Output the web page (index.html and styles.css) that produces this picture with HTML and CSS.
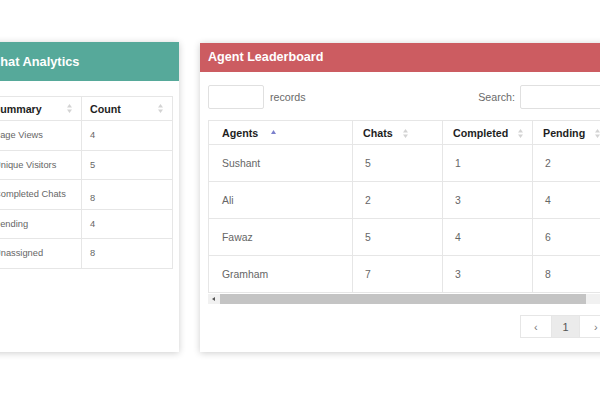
FILE: index.html
```html
<!DOCTYPE html>
<html>
<head>
<meta charset="utf-8">
<link rel="stylesheet" href="styles.css">
</head>
<body>
<div class="page">
  <section class="card card-left">
    <h2 class="card-title teal">Chat Analytics</h2>
    <div class="body-left">
      <table class="tbl tbl-small">
        <thead>
          <tr>
            <th class="c1">Summary<svg class="sort right" width="5" height="9" viewBox="0 0 5 9"><path d="M0 3.6L2.5 0 5 3.6z M0 5.4L2.5 9 5 5.4z"/></svg></th>
            <th>Count<svg class="sort right" width="5" height="9" viewBox="0 0 5 9"><path d="M0 3.6L2.5 0 5 3.6z M0 5.4L2.5 9 5 5.4z"/></svg></th>
          </tr>
        </thead>
        <tbody>
          <tr><td>Page Views</td><td>4</td></tr>
          <tr><td>Unique Visitors</td><td>5</td></tr>
          <tr><td>Completed Chats</td><td><span class="low">8</span></td></tr>
          <tr><td>Pending</td><td>4</td></tr>
          <tr><td>Unassigned</td><td>8</td></tr>
        </tbody>
      </table>
    </div>
  </section>

  <section class="card card-right">
    <h2 class="card-title red">Agent Leaderboard</h2>
    <div class="body-right">
      <div class="controls">
        <div class="ctl"><input class="box len-box" type="text"><span class="lbl rec">records</span></div>
        <div class="ctl"><span class="lbl srch">Search:</span><input class="box search-box" type="text"></div>
      </div>
      <div class="table-wrap">
        <table class="tbl tbl-big">
          <thead>
            <tr>
              <th class="a">Agents<svg class="sort asc" width="5" height="4" viewBox="0 0 5 4"><path d="M0 4L2.5 0 5 4z"/></svg></th>
              <th>Chats<svg class="sort" width="5" height="9" viewBox="0 0 5 9"><path d="M0 3.6L2.5 0 5 3.6z M0 5.4L2.5 9 5 5.4z"/></svg></th>
              <th>Completed<svg class="sort" width="5" height="9" viewBox="0 0 5 9"><path d="M0 3.6L2.5 0 5 3.6z M0 5.4L2.5 9 5 5.4z"/></svg></th>
              <th>Pending<svg class="sort" width="5" height="9" viewBox="0 0 5 9"><path d="M0 3.6L2.5 0 5 3.6z M0 5.4L2.5 9 5 5.4z"/></svg></th>
            </tr>
          </thead>
          <tbody>
            <tr><td>Sushant</td><td>5</td><td>1</td><td>2</td></tr>
            <tr><td>Ali</td><td>2</td><td>3</td><td>4</td></tr>
            <tr><td>Fawaz</td><td>5</td><td>4</td><td>6</td></tr>
            <tr><td>Gramham</td><td>7</td><td>3</td><td>8</td></tr>
          </tbody>
        </table>
      </div>
      <div class="hscroll"><span class="arrow"></span><span class="thumb"></span></div>
      <div class="pager">
        <span class="pg">&#8249;</span><span class="pg active">1</span><span class="pg">&#8250;</span>
      </div>
    </div>
  </section>
</div>
</body>
</html>
```

FILE: styles.css
```css
html, body {
  margin: 0;
  padding: 0;
  overflow: hidden;
  background: #fff;
}
body {
  font-family: "Liberation Sans", Arial, sans-serif;
  width: 600px;
  height: 400px;
}
.page {
  display: flex;
  align-items: flex-start;
  gap: 21px;
  padding-top: 42px;
  margin-left: -24px;
  width: 800px;
}
.card {
  flex: none;
  background: #fff;
  box-shadow: 0 1px 7px rgba(0, 0, 0, 0.2);
}
.card-left {
  width: 203px;
  height: 310px;
}
.card-right {
  width: 420px;
  height: 309px;
  margin-top: 1px;
  overflow: hidden;
}
.card-title {
  margin: 0;
  color: #fff;
  font-weight: bold;
}
.teal {
  background: #56a99a;
  height: 39px;
  line-height: 39px;
  padding-left: 15px;
  font-size: 12.8px;
}
.red {
  background: #cc5c61;
  height: 29px;
  line-height: 29px;
  padding-left: 8px;
  font-size: 12.6px;
}
.body-left {
  padding: 15px 6px 0 9px;
}
.tbl {
  border-collapse: collapse;
  border: 1px solid #e6e6e6;
}
.tbl th, .tbl td {
  border: 1px solid #e6e6e6;
  text-align: left;
  vertical-align: middle;
  padding: 0;
}
.tbl th {
  font-weight: bold;
  color: #1e1e1e;
  font-size: 10.7px;
}
.tbl-small {
  width: 188px;
  table-layout: fixed;
}
.tbl-small th {
  height: 23px;
  padding: 0 9px 0 8px;
}
.tbl-small th.c1 {
  width: 96px;
  box-sizing: border-box;
  padding-left: 7px;
}
.tbl-small td {
  height: 28.5px;
  font-size: 9.3px;
  color: #666;
  padding-left: 8px;
}
.low {
  display: inline-block;
  padding-top: 8px;
}
.sort {
  fill: #d3d3d3;
  vertical-align: middle;
  margin-left: 10px;
}
.sort.right {
  float: right;
  margin-top: 1px;
}
.sort.asc {
  fill: #7b80cc;
  margin-left: 13px;
  vertical-align: 3px;
}
.body-right {
  padding: 13px 8px 14px 8px;
}
.controls {
  display: flex;
  justify-content: space-between;
  align-items: center;
  height: 24px;
}
.ctl {
  display: flex;
  align-items: center;
}
.box {
  box-sizing: border-box;
  height: 24px;
  border: 1px solid #e0e0e0;
  border-radius: 2px;
  margin: 0;
  padding: 0;
  background: #fff;
}
.len-box {
  width: 56px;
}
.search-box {
  width: 92px;
}
.lbl {
  font-size: 10.7px;
  color: #6a6a6a;
}
.rec {
  margin-left: 6px;
}
.srch {
  margin-right: 5px;
}
.table-wrap {
  margin-top: 11px;
  overflow: hidden;
  width: 404px;
}
.tbl-big {
  width: 414px;
  table-layout: fixed;
}
.tbl-big th {
  height: 24px;
  padding-left: 10px;
  width: 90px;
  box-sizing: border-box;
}
.tbl-big th.a {
  width: 144px;
  padding-left: 13px;
}
.tbl-big td {
  height: 36px;
  font-size: 10.4px;
  color: #666;
  padding-left: 12px;
}
.tbl-big td:first-child {
  padding-left: 13px;
}
.hscroll {
  display: flex;
  align-items: center;
  height: 10px;
  margin-top: 1px;
  background: #f1f1f1;
  width: 404px;
}
.arrow {
  width: 0;
  height: 0;
  border-top: 2px solid transparent;
  border-bottom: 2px solid transparent;
  border-right: 3px solid #555;
  margin-left: 4px;
}
.thumb {
  height: 10px;
  width: 366px;
  margin-left: 5px;
  background: #c4c4c4;
}
.pager {
  display: flex;
  margin-top: 11px;
  margin-left: 312px;
}
.pg {
  box-sizing: border-box;
  height: 23px;
  width: 35px;
  border: 1px solid #e6e6e6;
  display: flex;
  align-items: center;
  justify-content: center;
  font-size: 11px;
  color: #777;
}
.pg + .pg {
  border-left: none;
}
.pg.active {
  width: 32px;
  background: #ebebeb;
  color: #555;
}
```
